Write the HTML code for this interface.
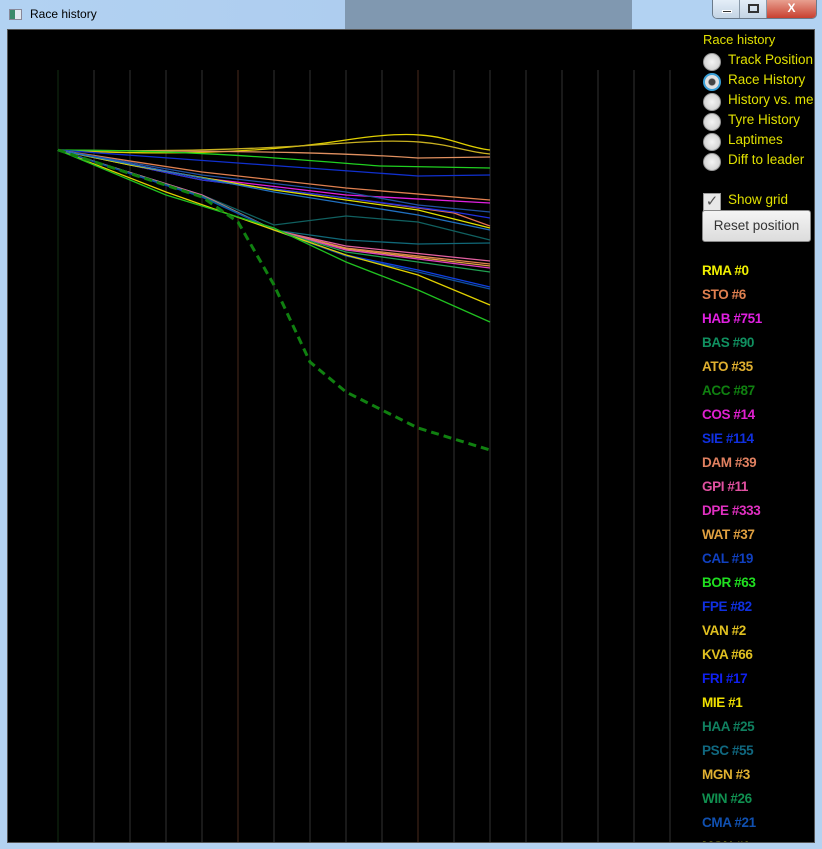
<!DOCTYPE html>
<html><head><meta charset="utf-8"><style>
*{margin:0;padding:0;box-sizing:border-box}
body{width:822px;height:849px;overflow:hidden;background:#b4d2f0;font-family:"Liberation Sans",sans-serif;position:relative}
.tb{position:absolute;left:0;top:0;width:822px;height:29px;background:linear-gradient(90deg,#b2d2f2 0,#aecdef 345px,#8098b0 345px,#8098b0 632px,#b2d2f2 632px)}
.title{position:absolute;left:30px;top:7px;font-size:12px;color:#000}
.ico{position:absolute;left:9px;top:9px;width:13px;height:11px;background:linear-gradient(90deg,#3a8a6a 0 5px,#e0e8f0 5px);border:1px solid #889}
.btns{position:absolute;left:712px;top:0;width:105px;height:19px;border:1px solid #6a7a8a;border-top:none;border-radius:0 0 5px 5px;overflow:hidden;display:flex}
.b{width:27px;height:18px;background:linear-gradient(#e4eef8,#c4d4e4);border-right:1px solid #8898a8;position:relative}
.x{flex:1;background:linear-gradient(#e8a090,#c84030);color:#fff;font-weight:bold;font-size:12px;text-align:center;line-height:17px}
.c{position:absolute;left:7px;top:29px;width:808px;height:814px;background:#000;overflow:hidden;border:1px solid #555}
.side{position:absolute;left:695px;top:2px;color:#e0e000;font-size:13px}
.r{position:absolute;left:695px;font-size:13.5px;color:#e0e000}
.rad{position:absolute;left:0;top:1px;width:18px;height:18px;border-radius:50%;background:radial-gradient(#f4f4f4,#c8c8c8);border:1px solid #999}
.lg{position:absolute;left:694px;font-size:13.5px;font-weight:bold;letter-spacing:-0.4px}
.btn{position:absolute;left:694px;top:180px;width:109px;height:32px;border:1px solid #888;border-radius:3px;background:linear-gradient(#f4f4f4,#dcdcdc);font-size:13.5px;color:#333;text-align:center;line-height:30px}
</style></head><body>
<div class="tb"></div>
<div class="ico"></div>
<div class="title">Race history</div>
<div class="btns"><div class="b"><div style="position:absolute;left:9px;top:10px;width:10px;height:3px;background:#333;border:1px solid #fff"></div></div><div class="b"><div style="position:absolute;left:8px;top:4px;width:11px;height:9px;border:2px solid #333"></div></div><div class="x">X</div></div>
<div class="c">
<svg width="816" height="844" style="position:absolute;left:-8px;top:-30px">
<g stroke-width="2" opacity="0.9">
<line x1="58" y1="70" x2="58" y2="844" stroke="#0a1a0a"/>
<line x1="94" y1="70" x2="94" y2="844" stroke="#1c1c1c"/>
<line x1="130" y1="70" x2="130" y2="844" stroke="#1c1c1c"/>
<line x1="166" y1="70" x2="166" y2="844" stroke="#1c1c1c"/>
<line x1="202" y1="70" x2="202" y2="844" stroke="#1c1c1c"/>
<line x1="238" y1="70" x2="238" y2="844" stroke="#2a1810"/>
<line x1="274" y1="70" x2="274" y2="844" stroke="#1c1c1c"/>
<line x1="310" y1="70" x2="310" y2="844" stroke="#1c1c1c"/>
<line x1="346" y1="70" x2="346" y2="844" stroke="#1c1c1c"/>
<line x1="382" y1="70" x2="382" y2="844" stroke="#1c1c1c"/>
<line x1="418" y1="70" x2="418" y2="844" stroke="#2a1810"/>
<line x1="454" y1="70" x2="454" y2="844" stroke="#1c1c1c"/>
<line x1="490" y1="70" x2="490" y2="844" stroke="#1c1c1c"/>
<line x1="526" y1="70" x2="526" y2="844" stroke="#1c1c1c"/>
<line x1="562" y1="70" x2="562" y2="844" stroke="#1c1c1c"/>
<line x1="598" y1="70" x2="598" y2="844" stroke="#1c1c1c"/>
<line x1="634" y1="70" x2="634" y2="844" stroke="#1c1c1c"/>
<line x1="670" y1="70" x2="670" y2="844" stroke="#1c1c1c"/>
</g>
<g fill="none" stroke-width="1.3">
<path d="M58 150 C150 155 250 155 346 140 S450 145 490 150" stroke="#e0d000"/>
<path d="M58 150 C150 152 250 150 346 143 S450 150 490 154" stroke="#c8b020"/>
<path d="M58 150 C200 152 300 150 418 158 L490 157" stroke="#e09060"/>
<path d="M58 150 C200 150 300 160 380 166 L490 168" stroke="#20d020"/>
<path d="M58 150 C200 160 320 170 418 176 L490 175" stroke="#1030d0"/>
<path d="M58 150 L202 172 L346 188 L490 200" stroke="#e08050"/>
<path d="M58 150 L202 178 L346 195 L490 203" stroke="#e020e0"/>
<path d="M58 150 L202 175 L346 192 L418 205 L490 212" stroke="#2050a0"/>
<path d="M58 150 L202 180 L346 198 L454 213 L490 226" stroke="#e07050"/>
<path d="M58 150 L202 180 L346 198 L454 212 L490 218" stroke="#2030e0"/>
<path d="M58 150 L130 165 L274 190 L418 210 L490 228" stroke="#e0e000"/>
<path d="M58 150 L274 192 L418 215 L490 230" stroke="#2070c0"/>
<path d="M58 150 L202 195 L274 225 L346 216 L418 222 L490 240" stroke="#106060"/>
<path d="M58 150 L202 195 L274 230 L346 240 L418 244 L490 243" stroke="#106878"/>
<path d="M58 150 L202 195 L274 230 L346 246 L490 261" stroke="#e060a0"/>
<path d="M58 150 L202 196 L274 230 L346 248 L490 264" stroke="#e08050"/>
<path d="M58 150 L202 196 L274 230 L346 249 L490 266" stroke="#e0a040"/>
<path d="M58 150 L202 196 L274 230 L346 250 L490 268" stroke="#e040c0"/>
<path d="M58 150 L202 196 L274 230 L346 252 L490 272" stroke="#20a050"/>
<path d="M58 150 L202 197 L274 230 L346 255 L418 270 L490 287" stroke="#1040e0"/>
<path d="M58 150 L202 197 L274 230 L346 256 L418 272 L490 289" stroke="#1050a0"/>
<path d="M58 150 L166 192 L274 230 L346 255 L418 275 L490 305" stroke="#e0d000"/>
<path d="M58 150 L166 195 L274 228 L346 262 L418 290 L490 322" stroke="#20c020"/>
<path d="M58 150 L202 197 L238 222 L274 285 L310 362 L346 392 L418 428 L490 450" stroke="#108010" stroke-width="3" stroke-dasharray="8,5"/>
</g>
</svg>
<div class="side">Race history</div>
<div class="r" style="top:22px"><div class="rad"></div><span style="margin-left:25px">Track Position</span></div>
<div class="r" style="top:42px"><div class="rad" style="border:2px solid #3aa0d8;background:radial-gradient(#444 0 3px,#e0e0e0 4px)"></div><span style="margin-left:25px">Race History</span></div>
<div class="r" style="top:62px"><div class="rad"></div><span style="margin-left:25px">History vs. me</span></div>
<div class="r" style="top:82px"><div class="rad"></div><span style="margin-left:25px">Tyre History</span></div>
<div class="r" style="top:102px"><div class="rad"></div><span style="margin-left:25px">Laptimes</span></div>
<div class="r" style="top:122px"><div class="rad"></div><span style="margin-left:25px">Diff to leader</span></div>
<div class="r" style="top:162px"><div style="position:absolute;left:0;top:1px;width:18px;height:18px;background:#e8e8e8;border:1px solid #999;color:#555;font-size:15px;line-height:16px;text-align:center">✓</div><span style="margin-left:25px">Show grid</span></div>
<div class="btn">Reset position</div>
<div class="lg" style="top:233px;color:#f0f000">RMA #0</div>
<div class="lg" style="top:257px;color:#e08050">STO #6</div>
<div class="lg" style="top:281px;color:#e020e0">HAB #751</div>
<div class="lg" style="top:305px;color:#109060">BAS #90</div>
<div class="lg" style="top:329px;color:#e0b030">ATO #35</div>
<div class="lg" style="top:353px;color:#108010">ACC #87</div>
<div class="lg" style="top:377px;color:#e020d0">COS #14</div>
<div class="lg" style="top:401px;color:#1030e0">SIE #114</div>
<div class="lg" style="top:425px;color:#e08060">DAM #39</div>
<div class="lg" style="top:449px;color:#e050a0">GPI #11</div>
<div class="lg" style="top:473px;color:#e030c0">DPE #333</div>
<div class="lg" style="top:497px;color:#e0a040">WAT #37</div>
<div class="lg" style="top:521px;color:#1040c0">CAL #19</div>
<div class="lg" style="top:545px;color:#20e020">BOR #63</div>
<div class="lg" style="top:569px;color:#1030e0">FPE #82</div>
<div class="lg" style="top:593px;color:#e0c020">VAN #2</div>
<div class="lg" style="top:617px;color:#e0c020">KVA #66</div>
<div class="lg" style="top:641px;color:#1020f0">FRI #17</div>
<div class="lg" style="top:665px;color:#f0e000">MIE #1</div>
<div class="lg" style="top:689px;color:#108060">HAA #25</div>
<div class="lg" style="top:713px;color:#106880">PSC #55</div>
<div class="lg" style="top:737px;color:#e0b030">MGN #3</div>
<div class="lg" style="top:761px;color:#109050">WIN #26</div>
<div class="lg" style="top:785px;color:#1050b0">CMA #21</div>
<div class="lg" style="top:809px;color:#a0a020">MGN #1</div>
</div>
</body></html>
